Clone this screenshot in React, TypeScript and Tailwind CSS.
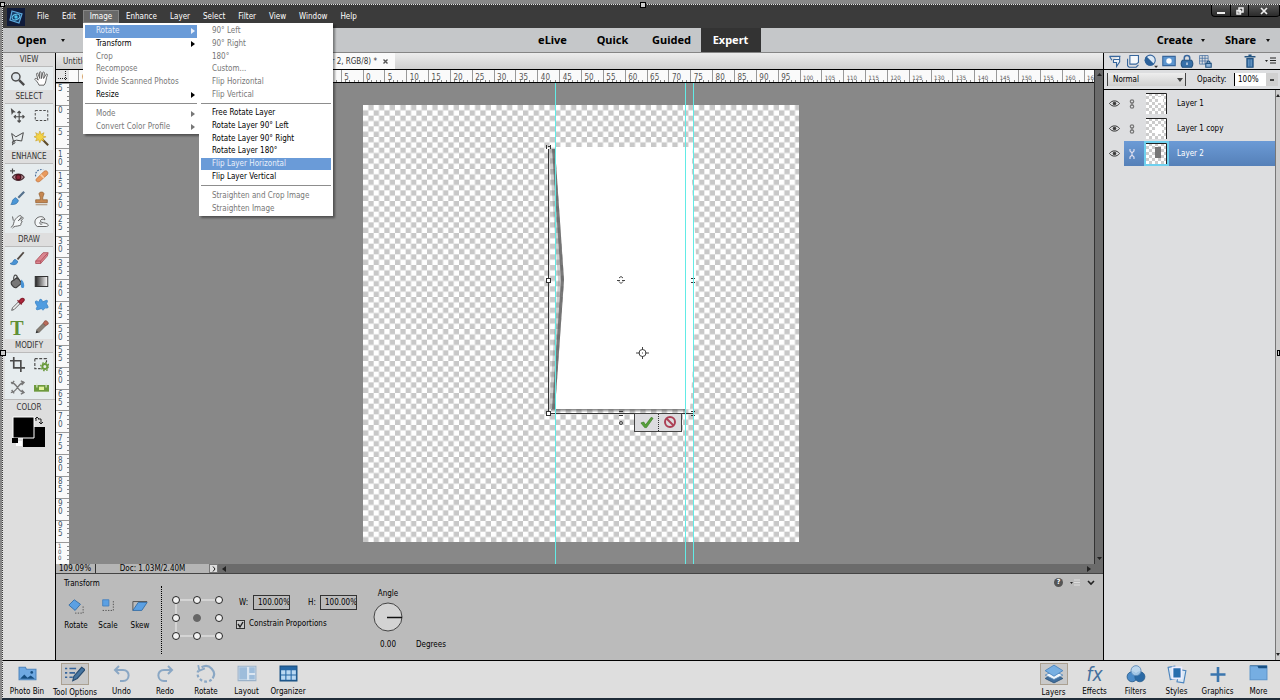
import type { ReactNode } from 'react';

interface MenuEntry {
  label: string;
  arrow?: boolean;
  disabled?: boolean;
  active?: boolean;
}

const imageMenu: MenuEntry[][] = [
  [
    { label: 'Rotate', arrow: true, active: true },
    { label: 'Transform', arrow: true },
    { label: 'Crop', disabled: true },
    { label: 'Recompose', disabled: true },
    { label: 'Divide Scanned Photos', disabled: true },
    { label: 'Resize', arrow: true },
  ],
  [
    { label: 'Mode', arrow: true, disabled: true },
    { label: 'Convert Color Profile', arrow: true, disabled: true },
  ],
];

const rotateMenu: MenuEntry[][] = [
  [
    { label: '90° Left', disabled: true },
    { label: '90° Right', disabled: true },
    { label: '180°', disabled: true },
    { label: 'Custom...', disabled: true },
    { label: 'Flip Horizontal', disabled: true },
    { label: 'Flip Vertical', disabled: true },
  ],
  [
    { label: 'Free Rotate Layer' },
    { label: 'Rotate Layer 90° Left' },
    { label: 'Rotate Layer 90° Right' },
    { label: 'Rotate Layer 180°' },
    { label: 'Flip Layer Horizontal', active: true },
    { label: 'Flip Layer Vertical' },
  ],
  [
    { label: 'Straighten and Crop Image', disabled: true },
    { label: 'Straighten Image', disabled: true },
  ],
];

// pixels per ruler unit at the current zoom
const UNIT = 4.37;

function Icon({ size = 17, children }: { size?: number; children: ReactNode }) {
  return (
    <svg width={size} height={size} viewBox="0 0 18 18" fill="none" stroke="#4b4b4b" strokeWidth="1.4" aria-hidden="true">
      {children}
    </svg>
  );
}

function MenuGroups({ groups }: { groups: MenuEntry[][] }) {
  return (
    <>
      {groups.map((group, g) => (
        <div key={g}>
          {g > 0 && (
            <div className="flex h-[6px] items-start px-[2px] pt-[2px]">
              <div className="h-px w-full bg-[#8d8d8d]" />
            </div>
          )}
          <ul className={`flex flex-col px-[2px] ${group.length > 2 ? 'h-[76px]' : 'h-[26px]'}`}>
            {group.map((item) => (
              <li key={item.label} className="flex min-h-0 flex-1">
                <button
                  type="button"
                  disabled={item.disabled}
                  className={`flex w-full items-center justify-between pr-[2px] pl-[11px] text-left leading-[12px] whitespace-nowrap ${
                    item.active ? 'bg-[#6a9bd8] text-[#e8effa]' : item.disabled ? 'text-[#777]' : 'text-black'
                  }`}
                >
                  {item.label}
                  {item.arrow && (
                    <svg width="4" height="6" viewBox="0 0 4 6" fill="currentColor" aria-hidden="true">
                      <path d="M0 0l4 3-4 3z" />
                    </svg>
                  )}
                </button>
              </li>
            ))}
          </ul>
        </div>
      ))}
    </>
  );
}

function WindowButtons() {
  const button = 'flex h-[11px] items-center justify-center border-r border-black';
  return (
    <div className="ml-auto flex h-[12px] self-start rounded-b-sm border-b border-l border-black bg-linear-to-b from-[#555] to-[#2b2b2b]">
      <button type="button" aria-label="Minimize" className={`${button} w-[19px]`}>
        <svg width="8" height="8" viewBox="0 0 8 8">
          <path d="M0 5h8v2H0z" fill="#eee" />
        </svg>
      </button>
      <button type="button" aria-label="Restore" className={`${button} w-[18px]`}>
        <svg width="8" height="8" viewBox="0 0 8 8" fill="none" stroke="#eee" strokeWidth="1.5">
          <path d="M3 1h4v4H3zM1 3.5h3.5V7H1z" />
        </svg>
      </button>
      <button type="button" aria-label="Close" className={`${button} w-[31px]`}>
        <svg width="8" height="8" viewBox="0 0 8 8" fill="none" stroke="#eee" strokeWidth="1.7">
          <path d="M1 1l6 6M7 1L1 7" />
        </svg>
      </button>
    </div>
  );
}

function MenuBar() {
  const item = 'h-[13px] px-[6px] text-white';
  return (
    <header className="flex h-[23px] items-center bg-[#3b3b3b]">
      <svg className="mr-[6px] ml-[4px]" width="18" height="18" viewBox="0 0 18 18" aria-label="Editor">
        <rect width="18" height="18" fill="#101b3a" />
        <path d="M5 3l10 3-3 9-9-3z" fill="#173c66" stroke="#5da9dd" strokeWidth="1.2" />
        <ellipse cx="9" cy="9" rx="4" ry="2.6" fill="none" stroke="#66c7ee" transform="rotate(-20 9 9)" />
        <circle cx="9" cy="9" r="1.7" fill="#49c3ee" />
      </svg>
      <nav className="flex items-center gap-px leading-[13px]">
        <button type="button" className={item}>File</button>
        <button type="button" className={item}>Edit</button>
        <div className="relative z-20">
          <button type="button" className="h-[13px] w-[36px] border border-[#858585] bg-[#686868] text-center leading-[11px] text-white">
            Image
          </button>
          <div className="absolute top-full left-0 w-[116px] bg-white pt-[2px] pb-px shadow-[2px_2px_2px_#0006]">
            <MenuGroups groups={imageMenu} />
            <div className="absolute top-0 left-full w-[134px] bg-white pt-[2px] pb-px shadow-[2px_2px_2px_#0006]">
              <MenuGroups groups={rotateMenu} />
            </div>
          </div>
        </div>
        <button type="button" className={item}>Enhance</button>
        <button type="button" className={item}>Layer</button>
        <button type="button" className={item}>Select</button>
        <button type="button" className={item}>Filter</button>
        <button type="button" className={item}>View</button>
        <button type="button" className={item}>Window</button>
        <button type="button" className={item}>Help</button>
      </nav>
      <WindowButtons />
    </header>
  );
}

function Caret() {
  return (
    <svg width="4" height="3" viewBox="0 0 4 3" aria-hidden="true">
      <path d="M0 0h4L2 3z" fill="#111" />
    </svg>
  );
}

function ModeBar() {
  return (
    <div className="grid h-[25px] grid-cols-[1fr_auto_1fr] items-stretch border-b border-[#858585] bg-[#c5c7c9] [font-family:'Noto_Sans',sans-serif] text-[11px] font-bold text-black">
      <button type="button" className="flex items-center gap-[15px] pl-[14px]">
        Open <Caret />
      </button>
      <div className="flex">
        <button type="button" className="w-[60px]">eLive</button>
        <button type="button" className="w-[60px]">Quick</button>
        <button type="button" className="w-[58px]">Guided</button>
        <button type="button" className="w-[60px] bg-[#333] text-white">Expert</button>
      </div>
      <div className="flex items-center justify-end gap-[20px] pr-[10px]">
        <button type="button" className="flex items-center gap-[8px]">
          Create <Caret />
        </button>
        <button type="button" className="flex items-center gap-[10px]">
          Share <Caret />
        </button>
      </div>
    </div>
  );
}

const toolGroups: { title: string; tools: { name: string; icon: ReactNode }[] }[] = [
  {
    title: 'VIEW',
    tools: [
      { name: 'Zoom', icon: <><circle cx="7" cy="7" r="5" strokeWidth="1.7" fill="#dde5ea" /><path d="M11 11l6 6" strokeWidth="2.8" /></> },
      { name: 'Hand', icon: <path d="M6 17c-1-3-3-5-5-7 0-2 3-1 4 1L3 4c0-2 2-2 2 0l2 5-.5-7c0-1.5 2-1.5 2 0L9 9l1.500-7c.5-1.500 2-1 2 .5L11.500 9l3-5c1-1 2 0 1.500 1-2 4-1 9-4 12z" fill="#fff" strokeWidth="1" /> },
    ],
  },
  {
    title: 'SELECT',
    tools: [
      { name: 'Move', icon: <><path d="M1 0l6 5-3 .5-2 3z" fill="#4b4b4b" stroke="none" /><path d="M11 4v13M5 10.500h12M9 6l2-2 2 2M9 15l2 2 2-2M7 8.500l-2 2 2 2M15 8.500l2 2-2 2" /></> },
      { name: 'Marquee', icon: <rect x="1.500" y="3" width="15" height="12" strokeDasharray="3 1.800" strokeWidth="1.200" /> },
      { name: 'Lasso', icon: <path d="M2 3l5 4 9-5-2 10-6-1-4 1zM4 12c-2 1-1 4 1 3s1-3-1-3l-1 5" strokeWidth="1.200" /> },
      { name: 'Magic Wand', icon: <><path d="M9 9l8 8" stroke="#5d4b2c" strokeWidth="2.500" /><path d="M7 0l1.500 4L12 2l-1.500 4 4 1-4 1.500L12 12l-3.500-1.500L7 14l-1.500-3.500L2 12l1.500-3.500L0 7l3.500-1.500L2 2l3.500 2z" fill="#f3d447" stroke="#c89d22" strokeWidth=".7" /></> },
    ],
  },
  {
    title: 'ENHANCE',
    tools: [
      { name: 'Red Eye Removal', icon: <><path d="M0 3.500h6M3 .5v6" /><path d="M3 11c3-5 11-5 14 0-3 5-11 5-14 0z" fill="#b78b94" stroke="#4c3238" /><circle cx="10" cy="11" r="3" fill="#8b2537" stroke="#47121c" /></> },
      { name: 'Spot Healing', icon: <><path d="M2 10c-1-5 3-9 9-8" stroke="#486d9a" strokeDasharray="2 1.500" /><path d="M3 13L12 4c3-2 6 1 4 4l-9 8c-3 2-6-1-4-3z" fill="#e99a5d" stroke="#b76b35" strokeWidth=".8" /><path d="M8 8l4 4" stroke="#f9cda6" strokeWidth="2" /></> },
      { name: 'Smart Brush', icon: <><path d="M17 1l-7 7" strokeWidth="2.600" stroke="#55718c" /><path d="M1 16c2-1 1-5 4-7l2-1 3 3c0 4-5 6-9 5z" fill="#4a96d6" stroke="#2c6aa1" strokeWidth=".8" /></> },
      { name: 'Clone Stamp', icon: <path d="M7.500 8c0-2-1.500-3-1.500-4.500 0-3 6-3 6 0C12 5 10.500 6 10.500 8v2.500H16V14H2v-3.500h5.500zM2 16.500h14" fill="#c58852" stroke="#8d5a2e" strokeWidth=".8" /> },
      { name: 'Blur', icon: <path d="M1 16c3-1 3-4 4-7s6-8 8-7-2 5-3 6l5-4c2 0 0 3-2 4 2 0 2 2 0 3 1 1 0 3-2 3-3 1-6 0-8 3M3 3l1 5" fill="#f4f7f8" strokeWidth="1" /> },
      { name: 'Sponge', icon: <path d="M4 15c-4-2-4-9 1-11 4-2 8 0 8 3-3-2-6 0-5 2s5 1 8 3c2 1 1 3-1 3H4zM8 9c-2 2-1 4 2 3" fill="#f4f7f8" strokeWidth="1" /> },
    ],
  },
  {
    title: 'DRAW',
    tools: [
      { name: 'Brush', icon: <><path d="M16.500 1.500L9 10" strokeWidth="2.200" stroke="#544b45" /><path d="M0 15c4 0 3-4 6-5l3 2c1 4-5 6-9 3z" fill="#4993d5" stroke="#2b70ac" strokeWidth=".8" /></> },
      { name: 'Eraser', icon: <><path d="M2 12L11 2h6l-1 4-8 9H2z" fill="#db8791" stroke="#a6454f" strokeWidth=".9" /><path d="M2 12h6l8-9M8 15v-3" stroke="#a6454f" strokeWidth=".9" /></> },
      { name: 'Paint Bucket', icon: <><path d="M2 9l7-5 5 7-6 5c-3 2-8-4-6-7z" fill="#777" stroke="#3c3c3c" /><path d="M5 8c-2-5 1-8 3-6l2 5" /><path d="M14 8c2 2 3 6 2 8-2 1-3-1-2-8z" fill="#4993d5" stroke="#4993d5" /></> },
      { name: 'Gradient', icon: <><defs><linearGradient id="ramp"><stop stopColor="#222" /><stop offset="1" stopColor="#fff" /></linearGradient></defs><rect x="1.500" y="3" width="15" height="12" fill="url(#ramp)" stroke="#333" strokeWidth="1.200" /></> },
      { name: 'Eyedropper', icon: <><path d="M2 16l1-3 7-7 2 2-7 7z" fill="#f0f0f0" strokeWidth="1" /><path d="M9 4l5 5M11 6c1-3 3-5 5-4s1 3-3 6z" fill="#b3263c" stroke="#8a2231" strokeWidth="1.600" /></> },
      { name: 'Custom Shape', icon: <path d="M6 6l1-3c2-1 3 1 3 3l5-2c2 0 1 2 0 4l2 4c0 2-3 1-4 1-1 3-3 3-4 1-2 0-5 2-6 1s1-3 1-4C2 8 1 6 2 5s3 1 4 1z" fill="#4f9ce0" stroke="#3b83c4" strokeWidth="1" /> },
      { name: 'Type', icon: null },
      { name: 'Pencil', icon: <><path d="M2 16l1-4 3 3z" fill="#333" stroke="none" /><path d="M3 12l8-8 3 3-8 8z" fill="#8a8076" stroke="#5c544d" strokeWidth=".8" /><path d="M11 4l2-3c2-1 5 2 4 4l-3 2z" fill="#b96b5a" stroke="#84473a" strokeWidth=".8" /></> },
    ],
  },
  {
    title: 'MODIFY',
    tools: [
      { name: 'Crop', icon: <path d="M4.500 0v13H18M0 4.500h13V18" strokeWidth="2" /> },
      { name: 'Recompose', icon: <><path d="M1 2h14v4M1 2v12h7" strokeDasharray="3.500 1.800" /><circle cx="13" cy="11.500" r="3" stroke="#6b9b3e" strokeWidth="2.400" /><circle cx="13" cy="11.500" r="5" stroke="#6b9b3e" strokeDasharray="2 1.900" strokeWidth="1.500" /></> },
      { name: 'Content-Aware Move', icon: <path d="M1 3c4 0 6 3 8 6s3 5 8 6M1 15c4 0 6-3 8-6s4-6 8-6M13 1l4 2-3 3M5 1L2 5M13 17l4-2-3-3M2 12l3 4" stroke="#777" strokeWidth="1.600" /> },
      { name: 'Straighten', icon: <><rect x="0" y="6" width="18" height="8" fill="#6d9a3d" stroke="none" /><rect x="6" y="8" width="6" height="4" fill="#e2f29a" stroke="none" /><path d="M3.500 4v5M14.500 4v5" stroke="#dce8cf" /></> },
    ],
  },
];

function ToolBox() {
  return (
    <aside className="w-[53px] shrink-0 border-r border-black bg-[#dedede] text-center text-[8px] text-[#333]">
      {toolGroups.map((group) => (
        <section key={group.title} className="px-[2px]">
          <h2 className="h-[13px] leading-[13px]">{group.title}</h2>
          <div className="grid grid-cols-2 border-t border-[#bbb] bg-[#e6ecee]">
            {group.tools.map((tool) => (
              <button key={tool.name} type="button" aria-label={tool.name} className="flex h-[23px] items-center justify-center">
                {tool.icon ? (
                  <Icon size={15}>{tool.icon}</Icon>
                ) : (
                  <span className="[font-family:'Liberation_Serif',serif] text-[20px] leading-[20px] font-bold text-[#5f8f35]">T</span>
                )}
              </button>
            ))}
          </div>
        </section>
      ))}
      <h2 className="h-[16px] border-t border-[#bbb] leading-[16px]">COLOR</h2>
      <div className="flex justify-center pt-px">
        <svg width="34" height="32" viewBox="0 0 34 32" aria-label="Colors">
          <rect x="11" y="11" width="22" height="20" fill="#000" />
          <path d="M1 1h21v21H1z" fill="#000" stroke="#fff" />
          <path d="M4 25h6v5H4z" fill="#fff" />
          <path d="M0 22h6v5H0z" fill="#000" />
          <path d="M24 5V2M23 3l2-2 2 2M26 3h3v4M27 6l2 2 2-2" fill="none" stroke="#222" />
        </svg>
      </div>
    </aside>
  );
}

function HorizontalRuler() {
  const origin = 482;
  const labels = Array.from({ length: 47 }, (_, i) => (i - 13) * 5);
  return (
    <div className="flex min-w-0 flex-1 justify-center overflow-hidden bg-[#fafafa]">
      <svg className="shrink-0" width="1401" height="12" shapeRendering="crispEdges" aria-hidden="true">
        {labels.map((n) => {
          const x = origin + n * UNIT;
          return (
            <g key={n}>
              <path d={`M${x} 0V12`} stroke="#999" />
              <path d={`M${x + UNIT} 10v2m${UNIT} -2v2m${UNIT} -2v2m${UNIT} -2v2`} stroke="#888" />
              <text x={x + 3} y="10" fontSize={n > 99 ? 6 : 8} fill="#555">
                {Math.abs(n)}
              </text>
            </g>
          );
        })}
      </svg>
    </div>
  );
}

function VerticalRuler() {
  const origin = 132;
  const labels = Array.from({ length: 22 }, (_, i) => (i - 1) * 5);
  return (
    <div className="flex w-[13px] shrink-0 flex-col justify-center overflow-hidden bg-[#fafafa]">
      <svg className="shrink-0" width="13" height="702" aria-hidden="true">
        {labels.map((n) => {
          const y = origin + n * UNIT;
          const size = n > 99 ? 6 : 8;
          return (
            <g key={n} shapeRendering="crispEdges">
              <path d={`M0 ${y}H13`} stroke="#999" />
              <path d={`M11 ${y + UNIT}h2m-2 ${UNIT}h2m-2 ${UNIT}h2m-2 ${UNIT}h2`} stroke="#888" />
              {String(Math.abs(n)).split('').map((digit, d) => (
                <text key={d} x="2" y={y + size + d * size} fontSize={size} fill="#456">
                  {digit}
                </text>
              ))}
            </g>
          );
        })}
      </svg>
    </div>
  );
}

function Artwork() {
  return (
    <div className="relative">
      <svg className="block overflow-visible" width="437" height="438" viewBox="0 0 437 438" aria-label="Document">
        <defs>
          <pattern id="checker" width="10.667" height="10.667" patternUnits="userSpaceOnUse">
            <path d="M0 0h10.667v10.667H0z" fill="#fff" />
            <path d="M5.333 0h5.333v5.333H5.333zM0 5.333h5.333v5.333H0z" fill="#c8c8c8" />
          </pattern>
          <linearGradient id="foot" x2="0" y2="1">
            <stop stopColor="#333" stopOpacity=".6" />
            <stop offset="1" stopColor="#333" stopOpacity=".1" />
          </linearGradient>
        </defs>
        <path d="M0 0h436v437H0z" fill="url(#checker)" />
        <path d="M192 42H330L323 60V304H192L201 175z" fill="#fff" />
        <path d="M323 42h7c-4 40 4 80 3 125s-2 90-6 137h-4z" fill="#fff" />
        <path d="M186 44h6l9 131-9 129h-6l9-129z" fill="#777" fillOpacity=".35" />
        <path d="M189 44h3l9 131-9 129h-3l9-129z" fill="#555" fillOpacity=".7" />
        <path d="M188 304h134v3H188z" fill="url(#foot)" />
        <g fill="none" stroke="#333" shapeRendering="crispEdges">
          <path d="M185.500 44V308.500H330" />
          <path d="M183.500 173.500h4v4h-4zM183.500 306.500h4v4h-4z" fill="#fff" />
          <path d="M183.500 40v4M187.500 40v4M185 41.500h3M328 173.500h4M328 177.500h4M328 306.500h4M328 310.500h4M256 306.500h4M256 310.500h4" />
        </g>
        <g fill="none" stroke="#444">
          <path d="M254 175.500h3M259 175.500h3M256 173l2-1.500 2 1.500M256 176.500l2 2 2-2" />
          <circle cx="279.500" cy="248" r="3.500" />
          <path d="M279.500 242v3M279.500 251v3M273 248h4M282 248h4M279 248h1" />
          <circle cx="258" cy="318" r="1.500" />
        </g>
        <g fill="#62ebe6" shapeRendering="crispEdges">
          <rect x="192" y="-400" width="1" height="1200" />
          <rect x="322" y="-400" width="1" height="1200" />
          <rect x="330" y="-400" width="1" height="1200" />
        </g>
      </svg>
      <div className="absolute top-[308px] left-[271px] flex h-[19px] w-[48px] border border-[#444] bg-[#dcdcdf]">
        <button type="button" aria-label="Commit" className="flex w-[24px] items-center justify-center border-r border-dotted border-[#333]">
          <svg width="14" height="14" viewBox="0 0 15 14">
            <path d="M1 8l3-1 2 3 6-8 2 1-7 10H5z" fill="#56a03a" stroke="#367a21" strokeWidth=".7" />
          </svg>
        </button>
        <button type="button" aria-label="Cancel" className="flex flex-1 items-center justify-center">
          <svg width="14" height="14" viewBox="0 0 14 14" fill="none" stroke="#ac3f55" strokeWidth="2">
            <circle cx="7" cy="7" r="5" />
            <path d="M3.500 3.500l7 7" />
          </svg>
        </button>
      </div>
    </div>
  );
}

function DocumentView() {
  return (
    <main className="flex min-h-0 min-w-0 flex-1 flex-col">
      <div className="flex h-[16px] shrink-0 bg-linear-to-b from-[#ececec] to-[#cfcfcf] text-[8px] leading-[15px] text-[#333]">
        <button type="button" className="w-[140px] pl-[7px] text-left">Untitled-1 @ 66.7% (RGB/8)</button>
        <button type="button" className="flex w-[199px] items-center justify-end gap-[6px] bg-[#fafafa] pr-[7px] whitespace-nowrap">
          Untitled-2 @ 109% (Layer 2, RGB/8) *
          <svg width="5" height="5" viewBox="0 0 5 5" stroke="#555" strokeWidth="1.4">
            <path d="M.5.5l4 4M4.5.5l-4 4" />
          </svg>
        </button>
      </div>
      <div className="flex min-h-0 flex-1 border-t border-black">
        <div className="flex min-w-0 flex-1 flex-col">
          <div className="flex h-[13px] shrink-0 border-b border-black">
            <svg className="w-[13px] shrink-0 bg-[#e4e4e4]" height="12" viewBox="0 0 13 12" fill="none" stroke="#222" strokeDasharray="1 1">
              <path d="M9.5 1v10M2 8.5h10" />
            </svg>
            <HorizontalRuler />
          </div>
          <div className="flex min-h-0 flex-1">
            <VerticalRuler />
            <div className="flex min-w-0 flex-1 items-center justify-center overflow-hidden bg-[#888]">
              <Artwork />
            </div>
          </div>
        </div>
        <div className="flex w-[9px] shrink-0 flex-col items-center justify-between border-l border-[#333] bg-[#6b6b6b] py-[3px]">
          <svg width="5" height="4" viewBox="0 0 5 4"><path d="M0 3h5L2.500 0z" fill="#222" /></svg>
          <svg width="5" height="4" viewBox="0 0 5 4"><path d="M0 0h5L2.500 3z" fill="#222" /></svg>
        </div>
      </div>
      <div className="flex h-[10px] shrink-0 items-stretch border-b border-[#444] bg-[#6b6b6b] text-[8px] leading-[10px] text-black">
        <span className="w-[40px] border-r border-[#333] bg-[#b5b5b5] pl-[3px]">109.09%</span>
        <span className="w-[113px] bg-[#b5b5b5] text-center">Doc: 1.03M/2.40M</span>
        <button type="button" aria-label="Status options" className="flex w-[9px] items-center justify-center border border-[#777] bg-[#ddd]">
          <svg width="4" height="6" viewBox="0 0 4 6" fill="none" stroke="#222"><path d="M1 .5l2 2.500-2 2.500" /></svg>
        </button>
        <div className="flex flex-1 items-center justify-between pr-[12px] pl-[4px]">
          <svg width="4" height="6" viewBox="0 0 4 6"><path d="M4 0v6L0 3z" fill="#222" /></svg>
          <svg width="4" height="6" viewBox="0 0 4 6"><path d="M0 0v6l4-3z" fill="#222" /></svg>
        </div>
      </div>
      <TransformOptions />
    </main>
  );
}

function TransformOptions() {
  const mode = 'flex w-[32px] flex-col items-center gap-[6px]';
  const field = 'h-[15px] w-[37px] border border-[#333] bg-transparent pl-[4px] leading-[13px]';
  return (
    <section className="flex h-[86px] shrink-0 items-start bg-[#bbb] text-[8px] leading-[12px] text-black">
      <div className="w-[105px] pt-[4px] pl-[4px]">
        <h2 className="pl-[4px]">Transform</h2>
        <div className="flex pt-[8px]">
          <button type="button" className={mode}>
            <Icon size={16}>
              <path d="M8 17h9v-9" strokeDasharray="1.5 1.5" strokeWidth="1" />
              <path d="M1 8l6-6 7 5-6 7z" fill="#5ba0e3" stroke="#356ea5" strokeWidth="1" />
            </Icon>
            Rotate
          </button>
          <button type="button" className={mode}>
            <Icon size={16}>
              <path d="M3 2h7v7H3z" fill="#5ba0e3" stroke="#4681bd" strokeWidth="1" />
              <path d="M3 14h12V3" strokeDasharray="1.5 1.5" strokeWidth="1" />
            </Icon>
            Scale
          </button>
          <button type="button" className={mode}>
            <Icon size={16}>
              <path d="M1 4h16M1 4v10" strokeWidth="1" />
              <path d="M7 5h10l-6 9H1z" fill="#5ba0e3" stroke="#356ea5" strokeWidth="1" />
            </Icon>
            Skew
          </button>
        </div>
      </div>
      <div className="mt-[12px] h-[68px] border-l border-dotted border-black" />
      <svg className="mt-[21px] ml-[9px]" width="52" height="46" viewBox="0 0 52 46" aria-label="Reference point">
        <path d="M5 5h43M5 5v36M5 41h43" stroke="#eee" />
        {[5, 26, 48].map((x) =>
          [5, 23, 41].map((y) => (
            <circle key={`${x}-${y}`} cx={x} cy={y} r="3.5" fill={x === 26 && y === 23 ? '#666' : '#f2f2f2'} stroke={x === 26 && y === 23 ? '#666' : '#222'} />
          )),
        )}
      </svg>
      <div className="ml-[13px] w-[136px] pt-[21px]">
        <div className="flex items-center pl-[3px]">
          <label htmlFor="scale-w" className="w-[14px]">W:</label>
          <input id="scale-w" defaultValue="100.00%" className={field} />
          <label htmlFor="scale-h" className="ml-[18px] w-[12px]">H:</label>
          <input id="scale-h" defaultValue="100.00%" className={field} />
        </div>
        <label className="flex items-center gap-[4px] pt-[8px]">
          <span className="grid size-[9px]">
            <input type="checkbox" defaultChecked className="peer col-start-1 row-start-1 size-[9px] appearance-none border border-[#333] bg-[#ccc]" />
            <svg className="pointer-events-none col-start-1 row-start-1 hidden peer-checked:block" width="9" height="9" viewBox="0 0 9 9" fill="none" stroke="#222" strokeWidth="1.4">
              <path d="M2 4l2 3 3-5" />
            </svg>
          </span>
          Constrain Proportions
        </label>
      </div>
      <div className="flex w-[32px] flex-col items-center pt-[14px]">
        <label htmlFor="angle">Angle</label>
        <svg className="mt-[2px]" width="30" height="30" viewBox="0 0 30 30">
          <circle cx="15" cy="15" r="14" fill="#d3d3d3" stroke="#444" />
          <path d="M14 15.5h15" stroke="#111" strokeWidth="1.5" />
        </svg>
        <input id="angle" defaultValue="0.00" className="mt-[7px] w-[30px] bg-transparent text-center" />
      </div>
      <span className="pt-[65px] pl-[12px]">Degrees</span>
      <div className="ml-auto flex items-center gap-[7px] pt-[4px] pr-[8px]">
        <button type="button" aria-label="Help" className="flex size-[9px] items-center justify-center rounded-full bg-[#555] text-[7px] leading-[9px] font-bold text-white">?</button>
        <svg width="10" height="8" viewBox="0 0 10 8"><path d="M0 3h3L1.500 5z" fill="#222" /><path d="M4 1h6M4 3.500h6M4 6h6" stroke="#ddd" /></svg>
        <svg width="8" height="6" viewBox="0 0 8 6" fill="none" stroke="#222" strokeWidth="1.6"><path d="M1 1l3 3 3-3" /></svg>
      </div>
    </section>
  );
}

const layers = [
  { name: 'Layer 1', shape: 'M12 4h5v6h-5z', fill: '#fff' },
  { name: 'Layer 1 copy', shape: 'M9 8h7v8H9z', fill: '#fff' },
  { name: 'Layer 2', shape: 'M9 4h6v11H9z', fill: '#777', active: true },
];

function LayersPanel() {
  return (
    <aside className="flex w-[177px] shrink-0 flex-col border-l border-black bg-[#dddee0] text-[8px] text-black">
      <div className="flex h-[16px] shrink-0 items-center gap-[4px] pr-[4px] pl-[4px]">
        <Icon size={14}><path d="M2 3h14M2 3l3 5M7 7h8M7 7v4h4v5l4-6V3" stroke="#37669c" fill="#eef4fa" /></Icon>
        <Icon size={14}><path d="M5 2h11v9l-3 2H5z" stroke="#37669c" fill="#f5f8fb" /><path d="M2 6v9l2 2h9l3-3" stroke="#37669c" /></Icon>
        <Icon size={14}><circle cx="8" cy="8" r="6.500" fill="#dce9f5" stroke="#37669c" /><path d="M3 3a7 7 0 0 0 10 10z" fill="#2c6199" stroke="none" /><path d="M13 15h5l-2.500 3z" fill="#333" stroke="none" /></Icon>
        <Icon size={14}><path d="M1 3h16v12H1z" fill="#5c95cf" stroke="#37669c" /><circle cx="9" cy="9" r="3.500" fill="#fff" stroke="none" /></Icon>
        <Icon size={14}><path d="M5.500 8V5c0-4 7-4 7 0v3" stroke="#37669c" strokeWidth="2" /><path d="M3 8h12c2 3 2 6 0 9H3c-2-3-2-6 0-9z" fill="#3770a8" stroke="#255480" /><path d="M9 11v3" stroke="#fff" /></Icon>
        <Icon size={14}><path d="M2 2h11v11H2zM2 5.500h11M2 9h11M5.500 2v11M9 2v11" stroke="#37669c" strokeWidth=".9" /><path d="M10 12h7v5h-7zM11.500 12c0-4 4-4 4 0" stroke="#255480" fill="#8fb4d9" /></Icon>
        <div className="ml-auto flex items-center gap-[8px]">
          <Icon size={14}><path d="M2 3.500h14M7 1.500h4" stroke="#255480" strokeWidth="2" /><path d="M5 6h8v11H5z" fill="#3770a8" stroke="#255480" /><path d="M7.500 7v9M10.500 7v9" stroke="#9fc1e0" strokeWidth=".8" /></Icon>
          <svg width="11" height="8" viewBox="0 0 11 8"><path d="M0 3h3L1.500 5z" fill="#222" /><path d="M5 1h6M5 3.500h6M5 6h6" stroke="#222" /></svg>
        </div>
      </div>
      <div className="flex h-[21px] shrink-0 items-center border-y border-black pl-[3px]">
        <label className="grid items-center">
          <select aria-label="Blend mode" className="col-start-1 row-start-1 h-[13px] w-[79px] appearance-none border-x border-[#444] bg-linear-to-b from-[#eee] to-[#d0d0d0] pl-[5px] leading-[13px]">
            <option>Normal</option>
            <option>Multiply</option>
          </select>
          <svg className="pointer-events-none col-start-1 row-start-1 mr-[3px] justify-self-end" width="6" height="4" viewBox="0 0 6 4"><path d="M0 0h6L3 4z" fill="#444" /></svg>
        </label>
        <label htmlFor="opacity" className="ml-[11px] w-[37px]">Opacity:</label>
        <input id="opacity" defaultValue="100%" className="h-[13px] w-[32px] border-l border-black bg-white pl-[3px]" />
        <button type="button" aria-label="Opacity slider" className="flex h-[13px] w-[12px] items-center justify-center bg-[#d0d0d0]">
          <svg width="4" height="2" viewBox="0 0 4 2"><path d="M0 0h4v2H0z" fill="#444" /></svg>
        </button>
      </div>
      <div className="flex flex-1">
        <ul className="flex-1 pt-px">
          {layers.map((layer) => (
            <li key={layer.name} className="flex h-[25px] items-stretch">
              <button type="button" aria-label={`Toggle ${layer.name}`} className="flex w-[20px] items-center justify-center">
                <svg width="11" height="7" viewBox="0 0 11 7" fill="none" stroke="#333">
                  <path d="M.5 3.500C3 0 8 0 10.500 3.500 8 7 3 7 .5 3.500z" />
                  <circle cx="5.500" cy="3.500" r="1.300" fill="#333" />
                </svg>
              </button>
              <div className={`flex flex-1 items-center ${layer.active ? 'bg-linear-to-b from-[#6c9bd6] to-[#5580b8] text-white' : ''}`}>
                <svg className="mx-[5px]" width="6" height="10" viewBox="0 0 6 10" fill="none" stroke={layer.active ? '#dde' : '#777'} strokeWidth="1.2">
                  {layer.active ? (
                    <path d="M1 0v2l2 2 2-2V0M1 10V8l2-2 2 2v2M3 3v4" />
                  ) : (
                    <>
                      <circle cx="3" cy="2.500" r="1.700" />
                      <circle cx="3" cy="7.500" r="1.700" />
                      <path d="M3 3v4" />
                    </>
                  )}
                </svg>
                <svg className={`mr-[8px] ml-[4px] border-2 ${layer.active ? 'border-[#6fd0ee]' : 'border-transparent'}`} width="25" height="25" viewBox="0 0 21 21">
                  <defs>
                    <pattern id="thumb" width="6" height="6" patternUnits="userSpaceOnUse">
                      <path d="M0 0h6v6H0z" fill="#fff" />
                      <path d="M3 0h3v3H3zM0 3h3v3H0z" fill="#ccc" />
                    </pattern>
                  </defs>
                  <path d="M0 0h21v21H0z" fill="url(#thumb)" />
                  <path d="M0 .5h20.500V21" fill="none" stroke="#222" />
                  <path d={layer.shape} fill={layer.fill} />
                </svg>
                {layer.name}
              </div>
            </li>
          ))}
        </ul>
        <div className="flex w-[5px] flex-col justify-between border-l border-[#777] bg-[#ccc] py-[4px]">
          <svg width="4" height="3" viewBox="0 0 4 3"><path d="M0 3h4L2 0z" fill="#222" /></svg>
          <svg width="4" height="3" viewBox="0 0 4 3"><path d="M0 0h4L2 3z" fill="#222" /></svg>
        </div>
      </div>
    </aside>
  );
}

function TaskButton({ label, width, active, children }: { label: string; width: string; active?: boolean; children: ReactNode }) {
  return (
    <button type="button" className={`flex flex-col items-center whitespace-nowrap ${width}`}>
      <span className={`flex h-[24px] items-center justify-center ${active ? 'w-[28px] border border-[#aaa091] bg-[#c9c9c9]' : 'w-[24px]'}`}>
        {children}
      </span>
      <span className="pt-[2px] leading-[12px]">{label}</span>
    </button>
  );
}

function TaskBar() {
  return (
    <footer className="flex h-[38px] shrink-0 justify-between border-t border-black bg-[#dedede] pt-[2px] text-[8px] text-black">
      <div className="flex">
        <TaskButton label="Photo Bin" width="w-[48px]">
          <Icon size={19}><path d="M1 3h6l1 2h9v10H1z" fill="#6fa9e2" stroke="#4b84bd" strokeWidth="1" /><path d="M2 14l4-4 3 3 3-2 4 3z" fill="#174e80" stroke="none" /><circle cx="13" cy="8" r="1.300" fill="#174e80" stroke="none" /></Icon>
        </TaskButton>
        <TaskButton label="Tool Options" width="w-[48px]" active>
          <Icon size={20}><path d="M0 4h2M4 4h6M0 8h2M4 8h5M0 12h2M4 12h3" stroke="#37669c" /><path d="M7 15l1-4 7-8 3 2-7 8z" fill="#46749f" stroke="#274b70" strokeWidth="1" /></Icon>
        </TaskButton>
        <TaskButton label="Undo" width="w-[45px]">
          <Icon size={18}><path d="M6 1L2 5l4 4M2 5h8c8 0 7 11 0 11H7" stroke="#8aa7c4" strokeWidth="2" /></Icon>
        </TaskButton>
        <TaskButton label="Redo" width="w-[42px]">
          <Icon size={18}><path d="M12 1l4 4-4 4M16 5H8c-8 0-7 11 0 11h3" stroke="#8aa7c4" strokeWidth="2" /></Icon>
        </TaskButton>
        <TaskButton label="Rotate" width="w-[40px]">
          <Icon size={20}><path d="M5 3c7-4 14 4 10 10" stroke="#8aa7c4" strokeWidth="2" /><path d="M14 14C8 19-1 13 2 6" stroke="#8aa7c4" strokeWidth="2" strokeDasharray="2.500 2" /><path d="M2 1l1 5 5-2" stroke="#8aa7c4" strokeWidth="1.600" /></Icon>
        </TaskButton>
        <TaskButton label="Layout" width="w-[41px]">
          <Icon size={20}><path d="M1 2h16v13H1z" fill="#dbe6f1" stroke="#9bb2c9" strokeWidth="1" /><path d="M2 3h7v11H2zM11 3h5v5h-5zM11 10h5v4h-5z" fill="#9ebddb" stroke="none" /></Icon>
        </TaskButton>
        <TaskButton label="Organizer" width="w-[42px]">
          <Icon size={19}><path d="M1 2h16v14H1z" fill="#2467a5" stroke="#174e80" strokeWidth="1" /><path d="M2 6h4v4H2zM7 6h4v4H7zM12 6h4v4h-4zM2 11h4v4H2zM7 11h4v4H7zM12 11h4v4h-4z" fill="#bad8f2" stroke="none" /></Icon>
        </TaskButton>
      </div>
      <div className="flex pr-px">
        <TaskButton label="Layers" width="w-[41px]" active>
          <Icon size={20}><path d="M9 9l8 4-8 4-8-4z" fill="#416f9e" stroke="#31597f" strokeWidth=".8" /><path d="M9 6l8 4-8 4-8-4z" fill="#eef5fb" stroke="#5b8ab8" strokeWidth=".8" /><path d="M9 1l8 5-8 5-8-5z" fill="#77afe2" stroke="#4b84bd" strokeWidth=".8" /></Icon>
        </TaskButton>
        <TaskButton label="Effects" width="w-[41px]">
          <span className="[font-family:'DejaVu_Sans_Condensed','DejaVu_Sans',sans-serif] text-[19px] leading-[20px] text-[#446f9c] italic">fx</span>
        </TaskButton>
        <TaskButton label="Filters" width="w-[41px]">
          <Icon size={20}><circle cx="5.500" cy="11.500" r="4.500" fill="#4b8bc8" stroke="#2b608f" strokeWidth=".8" /><circle cx="12.500" cy="11.500" r="4.500" fill="#2b6aa5" stroke="#2b608f" strokeWidth=".8" /><circle cx="9" cy="6" r="4.500" fill="#b5d5f0" fillOpacity=".85" stroke="#5b8ab8" strokeWidth=".8" /></Icon>
        </TaskButton>
        <TaskButton label="Styles" width="w-[41px]">
          <Icon size={20}><path d="M1 3l6-1 1 11-5 1z" fill="#d9e7f4" stroke="#4b84bd" strokeWidth="1" /><path d="M11 5l6 1-2 11-6-1z" fill="#d9e7f4" stroke="#4b84bd" strokeWidth="1" /><path d="M5 3h8v10H5z" fill="#276eae" stroke="#eef" strokeWidth="1.500" /></Icon>
        </TaskButton>
        <TaskButton label="Graphics" width="w-[41px]">
          <Icon size={18}><path d="M9 2v15M1.500 9.500h15" stroke="#3b76ae" strokeWidth="2.600" /></Icon>
        </TaskButton>
        <TaskButton label="More" width="w-[41px]">
          <Icon size={19}><path d="M1 2h16v13H1z" fill="#76aee2" stroke="#5c95cb" strokeWidth="1" /><path d="M1 2h7l1 2h8V1.500H1z" fill="#195184" stroke="none" /></Icon>
        </TaskButton>
      </div>
    </footer>
  );
}

export default function App() {
  return (
    <div className="relative flex h-screen flex-col overflow-hidden bg-[#888] pt-[4px] pl-[2px] [font-family:'DejaVu_Sans_Condensed','DejaVu_Sans',sans-serif] text-[8px]">
      <div className="flex min-h-0 flex-1 flex-col border-t border-l border-dotted border-[#e4e4e4] bg-[#3b3b3b]">
        <MenuBar />
        <ModeBar />
        <div className="flex min-h-0 flex-1">
          <ToolBox />
          <DocumentView />
          <LayersPanel />
        </div>
        <TaskBar />
      </div>
      <div className="h-[2px] shrink-0 bg-[#1f2c38]" />
      {/* selection handles on the outer frame */}
      <span className="absolute top-[2px] left-0 size-[5px] border border-black bg-[#ccc]" />
      <span className="absolute top-[2px] left-1/2 size-[6px] border border-black bg-[#ccc]" />
      <span className="absolute top-1/2 left-0 size-[6px] border border-black bg-[#ccc]" />
      <span className="absolute top-1/2 right-0 h-[6px] w-[3px] border border-black bg-[#ccc]" />
    </div>
  );
}
